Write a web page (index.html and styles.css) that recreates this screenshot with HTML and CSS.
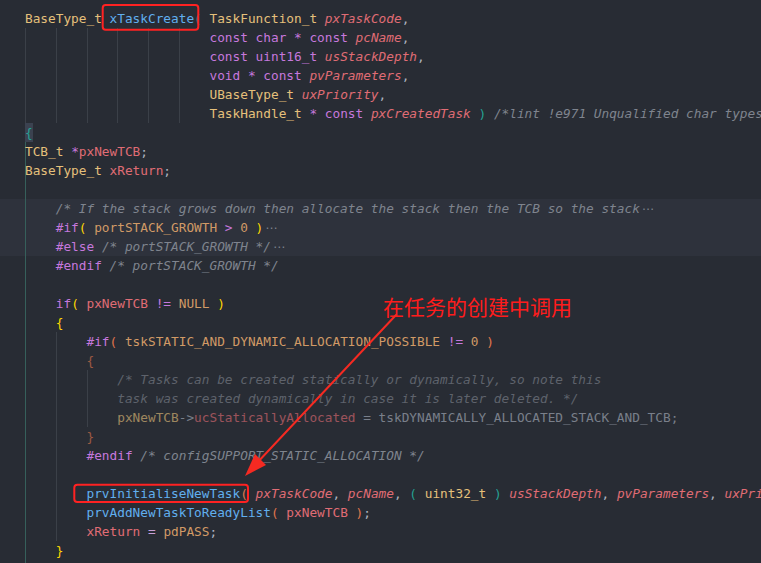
FILE: index.html
```html
<!DOCTYPE html>
<html lang="en">
<head>
<meta charset="utf-8">
<title>xTaskCreate</title>
<link rel="stylesheet" href="styles.css">
</head>
<body>
<div class="editor">
  <div class="ln"><span class="t">BaseType_t</span> <span class="f">xTaskCreate</span><span class="b1">(</span> <span class="t">TaskFunction_t</span> <span class="p">pxTaskCode</span>,</div>
  <div class="ln hdr">                        <span class="k">const</span> <span class="k">char</span> <span class="k">*</span> <span class="k">const</span> <span class="p">pcName</span>,</div>
  <div class="ln hdr">                        <span class="k">const</span> <span class="k">uint16_t</span> <span class="p">usStackDepth</span>,</div>
  <div class="ln hdr">                        <span class="k">void</span> <span class="k">*</span> <span class="k">const</span> <span class="p">pvParameters</span>,</div>
  <div class="ln hdr">                        <span class="t">UBaseType_t</span> <span class="p">uxPriority</span>,</div>
  <div class="ln hdr">                        <span class="t">TaskHandle_t</span> <span class="k">*</span> <span class="k">const</span> <span class="p">pxCreatedTask</span> <span class="b1">)</span> <span class="c">/*lint !e971 Unqualified char types are allowed for strings and single characters only. */</span></div>
  <div class="ln"><span class="b1 match">{</span></div>
  <div class="ln act"><span class="t">TCB_t</span> <span class="k">*</span><span class="v">pxNewTCB</span>;</div>
  <div class="ln act"><span class="t">BaseType_t</span> <span class="v">xReturn</span>;</div>
  <div class="ln act"> </div>
  <div class="ln act hl">    <span class="c">/* If the stack grows down then allocate the stack then the TCB so the stack</span><span class="fold">⋯</span></div>
  <div class="ln act hl">    <span class="k">#if</span><span class="b2">(</span> <span class="n">portSTACK_GROWTH</span> <span class="k">&gt;</span> <span class="n">0</span> <span class="b2">)</span><span class="fold">⋯</span></div>
  <div class="ln act hl">    <span class="k">#else</span> <span class="c">/* portSTACK_GROWTH */</span><span class="fold">⋯</span></div>
  <div class="ln act">    <span class="k">#endif</span> <span class="c">/* portSTACK_GROWTH */</span></div>
  <div class="ln act"> </div>
  <div class="ln act">    <span class="k">if</span><span class="b2">(</span> <span class="v">pxNewTCB</span> <span class="k">!=</span> <span class="n">NULL</span> <span class="b2">)</span></div>
  <div class="ln act">    <span class="b2">{</span></div>
  <div class="ln act g2">        <span class="k">#if</span><span class="b3">(</span> <span class="n">tskSTATIC_AND_DYNAMIC_ALLOCATION_POSSIBLE</span> <span class="k">!=</span> <span class="n">0</span> <span class="b3">)</span></div>
  <div class="ln act g2">        <span class="dim"><span class="b3">{</span></span></div>
  <div class="ln act g3">            <span class="dim"><span class="c">/* Tasks can be created statically or dynamically, so note this</span></span></div>
  <div class="ln act g3">            <span class="dim"><span class="c">task was created dynamically in case it is later deleted. */</span></span></div>
  <div class="ln act g3">            <span class="dim"><span class="t">pxNewTCB</span>-&gt;<span class="v">ucStaticallyAllocated</span> = <span class="x">tskDYNAMICALLY_ALLOCATED_STACK_AND_TCB</span>;</span></div>
  <div class="ln act g2">        <span class="dim"><span class="b3">}</span></span></div>
  <div class="ln act g2">        <span class="k">#endif</span> <span class="c">/* configSUPPORT_STATIC_ALLOCATION */</span></div>
  <div class="ln act g2"> </div>
  <div class="ln act g2">        <span class="f">prvInitialiseNewTask</span><span class="b3">(</span> <span class="p">pxTaskCode</span>, <span class="p">pcName</span>, <span class="b1">(</span> <span class="t">uint32_t</span> <span class="b1">)</span> <span class="p">usStackDepth</span>, <span class="p">pvParameters</span>, <span class="p">uxPriority</span>, <span class="p">pxCreatedTask</span>, <span class="v">pxNewTCB</span>, <span class="n">NULL</span> <span class="b3">)</span>;</div>
  <div class="ln act g2">        <span class="f">prvAddNewTaskToReadyList</span><span class="b3">(</span> <span class="v">pxNewTCB</span> <span class="b3">)</span>;</div>
  <div class="ln act g2">        <span class="v">xReturn</span> <span class="o">=</span> <span class="n">pdPASS</span>;</div>
  <div class="ln act">    <span class="b2">}</span></div>
  <div class="ln act"> </div>

  <div class="note">在任务的创建中调用</div>
  <svg class="marks" width="761" height="563" viewBox="0 0 761 563" xmlns="http://www.w3.org/2000/svg">
    <rect x="102.7" y="5" width="95.6" height="24.7" rx="3" fill="none" stroke="#ff2222" stroke-width="2"/>
    <rect x="74.3" y="484.7" width="173.7" height="17.3" rx="3" fill="none" stroke="#ff2222" stroke-width="2"/>
    <line x1="396" y1="315" x2="255" y2="465" stroke="#f52a22" stroke-width="2" stroke-linecap="round"/>
    <polygon points="245,476 266,465 255,454" fill="#f52a22"/>
  </svg>
</div>
</body>
</html>
```

FILE: styles.css
```css
html, body {
  margin: 0;
  padding: 0;
  background: #282c34;
}

.editor {
  position: relative;
  width: 761px;
  height: 563px;
  overflow: hidden;
  padding-top: 9px;
  box-sizing: border-box;
  background: #282c34;
  font-family: "DejaVu Sans Mono", "Liberation Mono", monospace;
  font-size: 12.78px;
  color: #abb2bf;
}

.ln {
  height: 19px;
  line-height: 19px;
  padding-left: 25px;
  white-space: pre;
  overflow: hidden;
}

/* indent guides */
.hdr {
  background:
    linear-gradient(#3b4048, #3b4048) 25px 0 / 1px 100% no-repeat,
    linear-gradient(#3b4048, #3b4048) 56px 0 / 1px 100% no-repeat,
    linear-gradient(#3b4048, #3b4048) 87px 0 / 1px 100% no-repeat,
    linear-gradient(#3b4048, #3b4048) 117px 0 / 1px 100% no-repeat,
    linear-gradient(#3b4048, #3b4048) 148px 0 / 1px 100% no-repeat,
    linear-gradient(#3b4048, #3b4048) 179px 0 / 1px 100% no-repeat;
}

.act {
  background: linear-gradient(#36605b, #36605b) 25px 0 / 1px 100% no-repeat;
}

.act.hl {
  background:
    linear-gradient(#36605b, #36605b) 25px 0 / 1px 100% no-repeat,
    #2e323c;
}

.act.g2 {
  background:
    linear-gradient(#36605b, #36605b) 25px 0 / 1px 100% no-repeat,
    linear-gradient(#3b4048, #3b4048) 56px 0 / 1px 100% no-repeat;
}

.act.g3 {
  background:
    linear-gradient(#36605b, #36605b) 25px 0 / 1px 100% no-repeat,
    linear-gradient(#3b4048, #3b4048) 56px 0 / 1px 100% no-repeat,
    linear-gradient(#3b4048, #3b4048) 87px 0 / 1px 100% no-repeat;
}

/* tokens */
.t { color: #e5c07b; }
.f { color: #61afef; }
.k { color: #c678dd; }
.p { color: #e06c75; font-style: italic; }
.v { color: #e06c75; }
.n { color: #d19a66; }
.o { color: #c8a0d8; }
.x { color: #abb2bf; }
.c { color: #7f848e; font-style: italic; }
.b1 { color: #25a195; }
.b2 { color: #ffd700; }
.b3 { color: #e0764c; }

.match {
  display: inline-block;
  height: 19px;
  background: #3b4250;
}

.fold {
  color: #7f848e;
  margin-left: 2px;
  font-family: "DejaVu Sans", "Noto Sans", sans-serif;
  font-size: 12px;
}

.dim { opacity: 0.62; }

/* annotations */
.note {
  position: absolute;
  left: 383px;
  top: 296px;
  font-family: "Noto Sans CJK SC", sans-serif;
  font-size: 21px;
  line-height: 21px;
  color: #ff1c1c;
  white-space: nowrap;
}

.marks {
  position: absolute;
  left: 0;
  top: 0;
  pointer-events: none;
}
```
